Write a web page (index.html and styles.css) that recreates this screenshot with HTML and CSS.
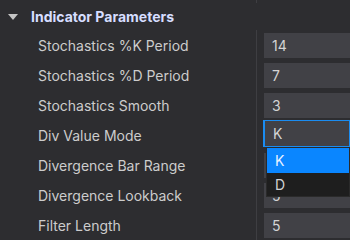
FILE: index.html
```
<!DOCTYPE html>
<html lang="en">
<head>
    <meta charset="UTF-8">
    <title>Indicator Parameters</title>
    <link rel="stylesheet" href="styles.css">
</head>
<body>
    <div class="settings">
        <div class="row prev">
            <div class="label"></div>
            <div class="value"></div>
        </div>
        <div class="section-head">
            <span class="caret"></span>
            <span class="section-title">Indicator Parameters</span>
        </div>
        <div class="row">
            <div class="label">Stochastics %K Period</div>
            <div class="value"><div class="field">14</div></div>
        </div>
        <div class="row">
            <div class="label">Stochastics %D Period</div>
            <div class="value"><div class="field">7</div></div>
        </div>
        <div class="row">
            <div class="label">Stochastics Smooth</div>
            <div class="value"><div class="field">3</div></div>
        </div>
        <div class="row">
            <div class="label">Div Value Mode</div>
            <div class="value">
                <div class="field select focused">K</div>
                <div class="dropdown">
                    <div class="option active">K</div>
                    <div class="option">D</div>
                </div>
            </div>
        </div>
        <div class="row">
            <div class="label">Divergence Bar Range</div>
            <div class="value"><div class="field">5</div></div>
        </div>
        <div class="row">
            <div class="label">Divergence Lookback</div>
            <div class="value"><div class="field">5</div></div>
        </div>
        <div class="row">
            <div class="label">Filter Length</div>
            <div class="value"><div class="field">5</div></div>
        </div>
    </div>
</body>
</html>
```
FILE: styles.css
```
html, body {
    margin: 0;
    padding: 0;
    background: #2d2d30;
    overflow: hidden;
}
.settings {
    font-family: Inter, "Noto Sans", sans-serif;
    font-size: 14px;
    color: #cccccc;
}
.row {
    display: flex;
    height: 30px;
}
.row.prev {
    height: 3px;
}
.label {
    width: 218px;
    padding-left: 38px;
    border-right: 1px solid #3e3e42;
    display: flex;
    align-items: center;
    white-space: nowrap;
}
.value {
    flex: 1;
    position: relative;
    padding: 3px 0 0 7px;
}
.field {
    height: 25px;
    line-height: 25px;
    padding-left: 8px;
    background: #414146;
    color: #d4d4d4;
}
.field.focused {
    margin-top: -3px;
    margin-left: -1px;
    height: 25px;
    border: 1px solid #1b8cf0;
    border-left-width: 2px;
}
.section-head {
    display: flex;
    align-items: center;
    height: 27px;
}
.caret {
    width: 0;
    height: 0;
    margin-left: 8px;
    border-left: 5px solid transparent;
    border-right: 5px solid transparent;
    border-top: 6px solid #c5c5c5;
}
.section-title {
    margin-left: 13px;
    font-weight: 700;
    color: #d6deff;
}
.dropdown {
    position: absolute;
    top: 27px;
    left: 9px;
    right: 0;
    background: #1e1e1e;
    border: 1px solid #2a2a2a;
    z-index: 2;
}
.option {
    height: 23px;
    line-height: 23px;
    padding-left: 8px;
    color: #d4d4d4;
}
.option.active {
    height: 25px;
    line-height: 25px;
    background: #0a86ff;
    color: #e8f2ff;
}
```
